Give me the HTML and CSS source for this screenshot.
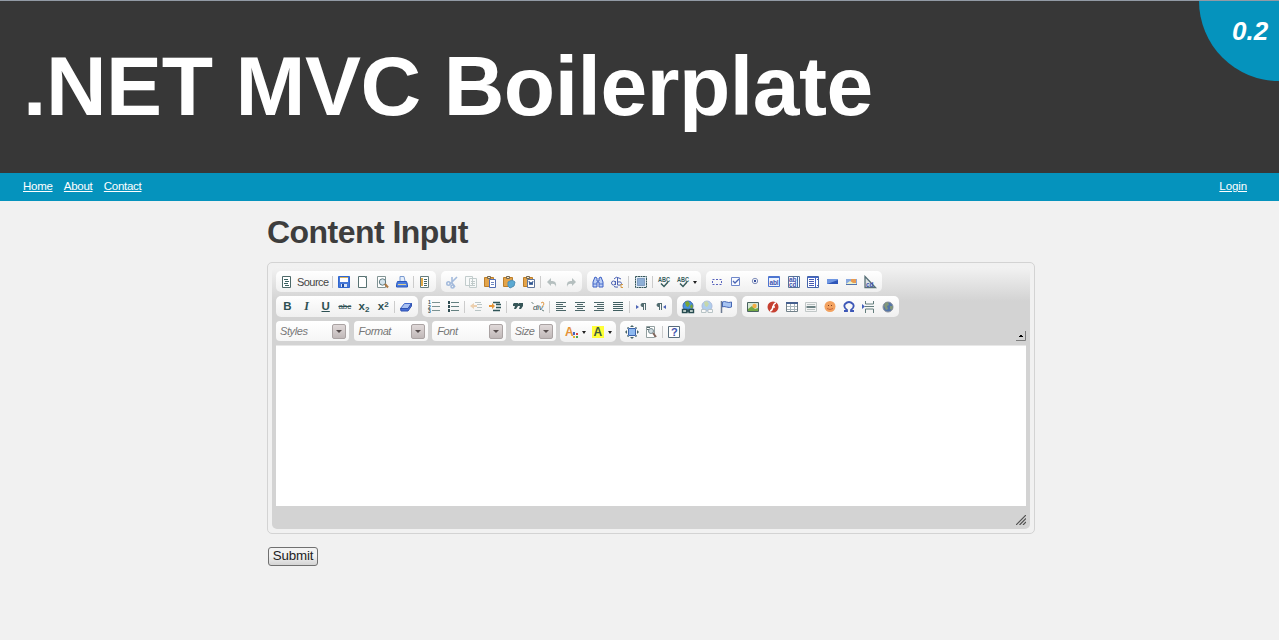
FILE: index.html
```html
<!DOCTYPE html>
<html lang="en">
<head>
<meta charset="utf-8">
<title>.NET MVC Boilerplate</title>
<link rel="stylesheet" href="styles.css">
</head>
<body>
<header class="masthead">
  <h1 class="site-title">.NET MVC Boilerplate</h1>
  <div class="version">0.2</div>
</header>
<nav class="nav">
  <a href="#">Home</a><a href="#">About</a><a href="#">Contact</a><a class="login" href="#">Login</a>
</nav>
<main class="content">
  <h2 class="heading">Content Input</h2>
  <div class="editor">
    <div class="editor-inner">
      <div class="row">
        <div class="group">
          <svg class="ic" viewBox="0 0 16 16"><path fill="#fff" stroke="#4c6868" d="M3.500 2.500h8v11h-8z"/><path stroke="#386060" d="M5 5.500h4M6 7.500h4M5 9.500h4M6 11.500h4"/></svg>
          <span class="source">Source</span><i class="sep"></i>
          <svg class="ic" viewBox="0 0 16 16"><path fill="#4577d8" stroke="#2f66cf" d="M2.500 2.500h11v11h-11z"/><path fill="#fff" d="M4 3h8v5H4z"/><path fill="#dcb35a" d="M4 3h8v1H4z"/><path fill="#d9e5f7" d="M5 10h6v3H5z"/><path fill="#204ca4" d="M6 10h2v3H6z"/></svg>
          <svg class="ic" viewBox="0 0 16 16"><path fill="#fff" stroke="#587272" d="M3.500 2.500h8v11h-8z"/><path fill="#718989" d="M10 2h2v2h-2z"/></svg>
          <svg class="ic" viewBox="0 0 16 16"><path fill="#fff" stroke="#829494" d="M3.500 2.500h8v11h-8z"/><circle cx="8.500" cy="8" r="3.200" fill="#d4e3ec" stroke="#607b80"/><path stroke="#ad7843" stroke-width="2" d="m11 10 3 3.500"/></svg>
          <svg class="ic" viewBox="0 0 16 16"><path fill="#e5eefb" stroke="#7b9bd0" d="M6 7V2.500h4L11 7"/><path fill="#4a7ce0" stroke="#2a58bd" d="m3.500 7.500-1 3v2.500h11v-2.500l-1-3z"/><path stroke="#dfcf92" d="M4 10.500h8"/></svg>
          <i class="sep"></i>
          <svg class="ic" viewBox="0 0 16 16"><path fill="#fff" stroke="#657d7d" d="M3.500 2.500h8v11h-8z"/><path stroke="#e0a948" stroke-width="2" d="M5 4v8"/><path stroke="#456969" d="M7 5.500h3M7 7.500h3M7 9.500h3M7 11.500h3"/></svg>
        </div>
        <div class="group">
          <svg class="ic" viewBox="0 0 16 16"><g fill="none" stroke="#a4bbdc" stroke-width="1.600"><path d="M13 3 6 10M8 3v6l3 4"/><circle cx="4.500" cy="9.500" r="1.700"/><circle cx="8.500" cy="12.500" r="1.500"/></g></svg>
          <svg class="ic" viewBox="0 0 16 16"><path fill="#f8fafa" stroke="#c2cccc" d="M2.500 2.500h7v9h-7zM6.500 4.500h7v9h-7z"/><path stroke="#c0caca" d="M8 7.500h4M8 9.500h4M8 11.500h4"/></svg>
          <svg class="ic" viewBox="0 0 16 16"><path fill="#e3a44a" stroke="#bd7e29" d="M2.500 3.500h9v9h-9z"/><path fill="#eee6cd" stroke="#77664d" d="M5.500 2.500h3v2h-3z"/><path fill="#fff" stroke="#526db1" d="M7.500 5.500h6v8h-6z"/><path stroke="#6f88c1" d="M9 8.500h3M9 10.500h3"/></svg>
          <svg class="ic" viewBox="0 0 16 16"><path fill="#e3a44a" stroke="#bd7e29" d="M2.500 3.500h9v9h-9z"/><path fill="#eee6cd" stroke="#77664d" d="M5.500 2.500h3v2h-3z"/><path fill="#5ba9d2" stroke="#4f8fb5" d="m7 8 4-2 3 2-1 4-4 2-2-2z"/></svg>
          <svg class="ic" viewBox="0 0 16 16"><path fill="#e3a44a" stroke="#bd7e29" d="M2.500 3.500h9v9h-9z"/><path fill="#eee6cd" stroke="#77664d" d="M5.500 2.500h3v2h-3z"/><path fill="#fff" stroke="#60759a" d="M6.500 5.500h7v8h-7z"/><path fill="none" stroke="#29508d" d="m8 7 1 4 1-3 1 3 1-4"/></svg>
          <i class="sep"></i>
          <svg class="ic" viewBox="0 0 16 16"><path fill="#b5bfbf" d="M3 8l4-4v3q6-1 5 6-1-4-5-3v2z"/></svg>
          <svg class="ic" viewBox="0 0 16 16"><path fill="#b5bfbf" d="M13 8 9 4v3q-6-1-5 6 1-4 5-3v2z"/></svg>
        </div>
        <div class="group">
          <svg class="ic" viewBox="0 0 16 16"><path fill="#bed1f5" stroke="#3c5fc4" d="m5 3-2 5v5h4V8h2v5h4V8l-2-5-2 1v3H7V4z"/><path stroke="#4a6fce" d="M3 10h4M9 10h4"/></svg>
          <svg class="ic" viewBox="0 0 16 16"><g fill="none" stroke="#4c62b4"><circle cx="4.500" cy="9" r="2"/><path d="M6.500 7v4M8.500 4v7q4 1 4-1.500t-4-1.500M5 5q2-3 5-1l2 1M5 12.500q2 1 4 .5"/></g><path fill="none" stroke="#d79b42" d="M14 10.500h-2v3h2"/></svg>
          <i class="sep"></i>
          <svg class="ic" viewBox="0 0 16 16"><path fill="#e2eef7" stroke="#36565b" stroke-dasharray="2 .5" d="M2.500 2.500h11v11h-11z"/><path fill="#8eafd6" stroke="#4e6f9c" stroke-dasharray="1 1" d="M4.500 4.500h7v7h-7z"/></svg>
          <i class="sep"></i>
          <svg class="ic" viewBox="0 0 16 16"><text class="spell" x="2" y="7.500" textLength="12" lengthAdjust="spacingAndGlyphs">ABC</text><path fill="none" stroke="#365c5c" stroke-width="1.500" d="m5 9.500 3 3 4-4.500"/></svg>
          <span class="drop"><svg class="ic" viewBox="0 0 16 16"><text class="spell" x="2" y="7.500" textLength="12" lengthAdjust="spacingAndGlyphs">ABC</text><path fill="none" stroke="#365c5c" stroke-width="1.500" d="m5 9.500 3 3 4-4.500"/></svg></span>
        </div>
        <div class="group">
          <svg class="ic" viewBox="0 0 16 16"><path fill="none" stroke="#5862bd" stroke-dasharray="2 1.500" d="M3.500 5.500h9v5h-9z"/></svg>
          <svg class="ic" viewBox="0 0 16 16"><path fill="#f8faff" stroke="#7088ca" d="M3.500 3.500h8v8h-8z"/><path fill="none" stroke="#4965b4" stroke-width="1.300" d="m5 7 2 2 4-4"/></svg>
          <svg class="ic" viewBox="0 0 16 16"><circle cx="8" cy="7" r="2.700" fill="#fff" stroke="#8290bb"/><circle cx="8" cy="7" r="1.200" fill="#354d9b"/></svg>
          <svg class="ic" viewBox="0 0 16 16"><path fill="#edf4ff" stroke="#4d75d0" d="M2.500 2.500h11v10h-11z"/><path stroke="#4d75d0" d="M3 3.500h10"/><text class="field-text" x="3.500" y="11" textLength="9">abl</text></svg>
          <svg class="ic" viewBox="0 0 16 16"><path fill="#f9fbff" stroke="#557298" d="M2.500 2.500h11v11h-11z"/><text class="field-text" x="3" y="8">ab</text><text class="field-text" x="3" y="13">cd</text><path stroke="#4868ad" d="M11.500 3v10"/></svg>
          <svg class="ic" viewBox="0 0 16 16"><path fill="#fff" stroke="#4565aa" d="M2.500 2.500h11v11h-11z"/><path stroke="#4466cb" d="M3 3.500h10M10.500 3v10"/><path stroke="#485bb0" d="M4 5.500h5M4 7.500h5M4 9.500h5M4 11.500h5M12 5.500h1M12 11.500h1"/></svg>
          <svg class="ic" viewBox="0 0 16 16"><path fill="#7097e2" d="M3 5h11v5H3z"/><path fill="#2e56b9" d="m3 10 11-4v4z"/></svg>
          <svg class="ic" viewBox="0 0 16 16"><path fill="#88a8e1" d="M3 5h11v5H3z"/><path fill="#e89b52" d="M8 5h5v4H8z"/><path fill="#edf2cb" d="m3 10 4-3 3 2h3v1z"/><path stroke="#5372aa" d="M3 10.500h11"/></svg>
          <svg class="ic" viewBox="0 0 16 16"><path fill="#dbe4e5" stroke="#587078" stroke-width="1.300" d="m3 2.500 10.500 11H3z"/><text class="field-text" x="4" y="13">cd</text></svg>
        </div>
      </div>
      <div class="row">
        <div class="group">
          <b class="gl">B</b><i class="gl serif">I</i><b class="gl under">U</b><s class="gl small">abc</s><b class="gl">x<sub>2</sub></b><b class="gl">x<sup>2</sup></b>
          <i class="sep"></i>
          <svg class="ic" viewBox="0 0 16 16"><path fill="#a8c0f1" stroke="#4268c9" d="m2.500 9.500 4-5h7l-3.500 5z"/><path fill="#466ed8" stroke="#3153b0" d="M2.500 9.500H10l3.500-5v2.500L10 12H3z"/></svg>
        </div>
        <div class="group">
          <svg class="ic" viewBox="0 0 16 16"><path stroke="#7a9292" d="M6 3.500h8M6 7.500h8M6 11.500h8"/><text class="nums" x="2" y="5">1</text><text class="nums" x="2" y="9.500">2</text><text class="nums" x="2" y="14">3</text></svg>
          <svg class="ic" viewBox="0 0 16 16"><path stroke="#638080" d="M6 3.500h8M6 7.500h8M6 11.500h8"/><path fill="#304d53" d="M3 2h2v3H3zM3 6h2v3H3zM3 10h2v3H3z"/></svg>
          <i class="sep"></i>
          <svg class="ic pale" viewBox="0 0 16 16"><path stroke="#607d7d" d="M7 3.500h6M9 5.500h5M9 8.500h5M7 11.500h6"/><path fill="#dd9643" d="m2 7 4-3v2h3v2H6v2z"/></svg>
          <svg class="ic" viewBox="0 0 16 16"><path stroke="#2f5558" stroke-width="1.300" d="M6 3.500h7M9 5.500h5M9 8.500h5M6 11.500h7"/><path fill="#e69435" d="m8 7-3-3v2H2v2h3v2z"/></svg>
          <i class="sep"></i>
          <svg class="ic" viewBox="0 0 16 16"><path fill="#365658" d="M4 4h4v3l-2 3H4l1-3H3V5zM9 4h4v3l-2 3H9l1-3H8V5z"/></svg>
          <svg class="ic" viewBox="0 0 16 16"><text class="div" x="3" y="10.500" textLength="10">div</text><path fill="none" stroke="#68817e" d="m1.500 3.500 2 1M12 11l2 1"/><path fill="none" stroke="#df9b4b" d="m11 4 2-1 1 2-2 3"/></svg>
          <i class="sep"></i>
          <svg class="ic" viewBox="0 0 16 16"><path stroke="#4b6668" d="M3 3.500h10M3 5.500h7M3 7.500h10M3 9.500h7M3 11.500h10"/></svg>
          <svg class="ic" viewBox="0 0 16 16"><path stroke="#4b6668" d="M3 3.500h10M5 5.500h6M3 7.500h10M5 9.500h6M3 11.500h10"/></svg>
          <svg class="ic" viewBox="0 0 16 16"><path stroke="#4b6668" d="M3 3.500h10M6 5.500h7M3 7.500h10M6 9.500h7M3 11.500h10"/></svg>
          <svg class="ic" viewBox="0 0 16 16"><path stroke="#3f5e60" d="M3 3.500h10M3 5.500h10M3 7.500h10M3 9.500h10M3 11.500h10"/></svg>
          <i class="sep"></i>
          <svg class="ic" viewBox="0 0 16 16"><path fill="#4c64b5" d="m3 6 3 2-3 2z"/><path fill="#536d70" d="M13 4H9q-3 2 0 4h1v3h1V5h1v6h1z"/></svg>
          <svg class="ic" viewBox="0 0 16 16"><path fill="#4c64b5" d="m13 6-3 2 3 2z"/><path fill="#536d70" d="M9 4H5q-3 2 0 4h1v3h1V5h1v6h1z"/></svg>
        </div>
        <div class="group">
          <svg class="ic" viewBox="0 0 16 16"><circle cx="8" cy="7" r="5" fill="#4692dc" stroke="#3b62b5"/><path fill="#7aa536" d="m5 3 3-1 2 3-2 3-2-1zM10 7l2-2 1 3-2 2z"/><path fill="#e5efe9" stroke="#274c50" stroke-width="1.400" d="M2.500 10.500H7v3H2.500zM9 10.500h4.500v3H9zM6 12h4"/></svg>
          <svg class="ic pale" viewBox="0 0 16 16"><circle cx="8" cy="7" r="5" fill="#4692dc" stroke="#3b62b5"/><path fill="#7aa536" d="m5 3 3-1 2 3-2 3-2-1z"/><path fill="#fff" stroke="#607d82" d="M2.500 10.500H7v3H2.500zM9 10.500h4.500v3H9z"/></svg>
          <svg class="ic" viewBox="0 0 16 16"><path stroke="#6d7b92" stroke-width="1.500" d="M3.500 2v12"/><path fill="#a7c4f1" stroke="#4768b5" d="M4.500 3q2-1 4 0t5 0v5q-2 1-5 0t-4 0z"/></svg>
        </div>
        <div class="group">
          <svg class="ic" viewBox="0 0 16 16"><path fill="#d6e7d5" stroke="#496260" d="M2.500 3.500h11v9h-11z"/><path fill="#74a946" d="m3 10 4-3 3 3 3-1v3H3z"/><circle cx="9.500" cy="7" r="2.200" fill="#f4ad44"/></svg>
          <svg class="ic" viewBox="0 0 16 16"><circle cx="8" cy="8" r="5.500" fill="#c64031"/><path fill="none" stroke="#fff" stroke-width="1.500" d="M11 4q-2 0-3 4t-3 4M7 8h3"/></svg>
          <svg class="ic" viewBox="0 0 16 16"><path fill="#fff" stroke="#718089" d="M2.500 3.500h11v9h-11z"/><path stroke="#46608f" stroke-width="2" d="M2 4h12"/><path stroke="#a7b4ba" d="M3 7.500h10M3 10.500h10M6.500 5v7M10.500 5v7"/></svg>
          <svg class="ic" viewBox="0 0 16 16"><path fill="#f3f4f4" stroke="#c1c7c7" d="M2.500 3.500h11v9h-11z"/><path stroke="#bac1c1" d="M4 5.500h8M4 10.500h8"/><path stroke="#405d5f" stroke-width="1.500" d="M3.500 8h9"/></svg>
          <svg class="ic" viewBox="0 0 16 16"><circle cx="8" cy="7.500" r="5.500" fill="#f3a260"/><path fill="#753c22" d="M6 6h1v1H6zM9 6h1v1H9z"/><path fill="none" stroke="#c7653b" d="M5 9.500q3 2 6 0"/></svg>
          <svg class="ic" viewBox="0 0 16 16"><path fill="none" stroke="#3d57b7" stroke-width="1.800" d="M3 12h3v-1Q2 8 4 5q4-4 8 0 2 3-2 6v1h3"/></svg>
          <svg class="ic" viewBox="0 0 16 16"><path fill="none" stroke="#647e7d" d="M5.500 2v3h8V2M5.500 14v-4h8v4M5 7.500h9"/><path fill="#4461bb" d="m2 5 3 2.500L2 10z"/></svg>
          <svg class="ic" viewBox="0 0 16 16"><circle cx="8" cy="8" r="5" fill="#5274a8" stroke="#8d929e"/><path fill="#82977a" d="m5 4 3-1 1 3-2 1 1 3-2 1-2-4zM10 7h3l-1 4-2-1z"/></svg>
        </div>
      </div>
      <div class="row last">
        <div class="combo styles">Styles<span></span></div>
        <div class="combo format">Format<span></span></div>
        <div class="combo font">Font<span></span></div>
        <div class="combo size">Size<span></span></div>
        <div class="group">
          <span class="drop"><svg class="ic" viewBox="0 0 16 16"><text class="color-a" x="1" y="12">A</text><path fill="#3f67c0" d="M9 8h2v3H9z"/><path fill="#d7433d" d="M12 9h2v2h-2z"/><path fill="#e1b52f" d="M9 12h2v2H9z"/><path fill="#4ca253" d="M12 12h2v2h-2z"/></svg></span>
          <span class="drop"><svg class="ic" viewBox="0 0 16 16"><path fill="#ffff38" d="M2 2h12v12H2z"/><text class="bg-a" x="3.500" y="12">A</text></svg></span>
        </div>
        <div class="group">
          <svg class="ic" viewBox="0 0 16 16"><path fill="#8db9f0" stroke="#3b63a9" d="M4.500 4.500h7v7h-7z"/><path fill="#456365" d="m8 1 2 2H6zM8 15l-2-2h4zM1 8l2-2v4zM15 8l-2-2v4z"/><path fill="none" stroke="#7d9295" d="M5 3.500H3.500V5M11 3.500h1.500V5M3.500 11v1.500H5M12.500 11v1.500H11"/></svg>
          <svg class="ic" viewBox="0 0 16 16"><path fill="#fff" stroke="#93a0a0" d="M3.500 2.500h8v11h-8z"/><path stroke="#566b6f" d="M4 3.500h3M4 5.500h2"/><circle cx="8" cy="7" r="2.500" fill="#d0dce1" stroke="#778b8f"/><path stroke="#80665c" stroke-width="2" d="m10 9 3 4"/></svg>
          <i class="sep"></i>
          <svg class="ic" viewBox="0 0 16 16"><path fill="#fff" stroke="#596d7c" d="M2.500 2.500h11v11h-11z"/><text class="help" x="5" y="12">?</text></svg>
        </div>
        <svg class="collapse" viewBox="0 0 10 10"><path fill="none" stroke="#7c7c7c" d="M0 9.500h9.500V0"/><path fill="#000" d="M3 6h4V5H6V4H4v1H3z"/></svg>
      </div>
      <div class="edit-area"></div>
      <div class="statusbar"><svg viewBox="0 0 10 10"><path stroke="#505050" stroke-width="1.200" d="m0 10 10-10M3.500 10 10 3.500M7 10l3-3"/></svg></div>
    </div>
  </div>
  <button class="submit">Submit</button>
</main>
</body>
</html>
```
FILE: styles.css
```css
* { box-sizing: border-box; }
body { margin: 0; height: 640px; overflow: hidden; background: #f1f1f1; color: #373737; font-family: "Liberation Sans", Arial, sans-serif; }
.masthead { position: relative; height: 173px; padding: 37px 23px; background: #373737; border-top: 1px solid #929aa5; overflow: hidden; }
.site-title { margin: 0; color: #fff; font-size: 84px; line-height: 97px; letter-spacing: -.45px; white-space: nowrap; }
.version { position: absolute; right: 0; top: 0; width: 80px; height: 80px; padding: 15px 0 0 33px; border-bottom-left-radius: 80px; background: #0593bd; color: #fff; font: italic bold 26px/30px "Liberation Sans", Arial, sans-serif; }
.nav { display: flex; gap: 11.300px; height: 28px; padding: 0 32px 0 23px; background: #0593bd; font-size: 11.500px; line-height: 27px; letter-spacing: -.28px; }
.nav a { color: #fff; }
.nav .login { margin-left: auto; letter-spacing: -.1px; }
.content { width: 768px; margin-left: 267px; }
.heading { margin: 0; padding-top: 12px; height: 61px; color: #3d3d3d; font-size: 32px; line-height: 38px; letter-spacing: -.540px; }
.editor { height: 271.500px; padding: 4px; border: 1px solid #d3d3d3; border-radius: 5px; }
.editor-inner { height: 262px; padding: 4px; border-radius: 5px; background: linear-gradient(#f2f2f2, #d3d3d3 34px); }
.row { display: flex; gap: 4.600px; height: 25px; align-items: flex-start; }
.row.last { height: 24px; }
.group { display: flex; align-items: center; height: 21px; padding: 0 1.700px; border-radius: 5px; background: linear-gradient(#fff, #f0f0f0); }
.ic { flex: none; width: 16px; height: 16px; margin: 0 1.600px; }
.sep { flex: none; width: 1px; height: 12px; margin: 0 1.500px; background: #ccc; }
.source { width: 33.500px; padding-left: 0; color: #454545; font-size: 11px; letter-spacing: -.5px; }
.drop { display: flex; align-items: center; padding-right: 6.800px; position: relative; }
.drop::after { content: ""; position: absolute; right: 2.500px; top: 7px; border: 2.500px solid transparent; border-top: 3px solid #202020; border-bottom: 0; }
.gl { width: 19.200px; text-align: center; color: #2d5053; font-size: 11.500px; line-height: 19px; white-space: nowrap; }
.serif { font-family: "Liberation Serif", serif; font-weight: bold; font-size: 12px; }
.under { text-decoration: underline; }
.small { font-size: 8px; }
.gl sub, .gl sup { font-size: 8px; line-height: 0; }
.gl sub { vertical-align: -2px; }
.gl sup { vertical-align: 3px; }
.spell { font: bold 6.500px "Liberation Sans", sans-serif; fill: #365c5c; }
.field-text { font: bold 6.500px "Liberation Sans", sans-serif; fill: #4053ac; }
.nums { font: bold 5px "Liberation Sans", sans-serif; fill: #345154; }
.div { font: italic 8px "Liberation Sans", sans-serif; fill: #344f52; }
.color-a { font: bold 12px "Liberation Sans", sans-serif; fill: #e59137; }
.bg-a { font: bold 12px "Liberation Sans", sans-serif; fill: #405a3d; }
.help { font: bold 11px "Liberation Sans", sans-serif; fill: #4152ad; }
.pale { opacity: .4; }
.combo { display: flex; align-items: center; justify-content: space-between; height: 20px; padding: 0 3px 0 4px; border-radius: 4px; background: linear-gradient(#fff, #f5f5f5); color: #777; font-size: 11px; font-style: italic; letter-spacing: -.4px; }
.combo span { display: flex; align-items: center; justify-content: center; width: 14px; height: 15px; border: 1px solid #aaa3a3; border-radius: 2px; background: linear-gradient(#e0d9d9, #c0b8b8); }
.combo span::before { content: ""; border: 3px solid transparent; border-top: 3px solid #554c4c; border-bottom: 0; }
.styles { width: 73px; }
.format { width: 74px; padding-left: 5px; }
.font { width: 74px; padding-left: 5px; }
.size { width: 45px; }
.collapse { width: 10px; height: 10px; margin: 10px 0 0 auto; }
.edit-area { height: 160.500px; background: #fff; border-top: 1px solid #e8e8e8; }
.statusbar { display: flex; justify-content: flex-end; padding-top: 9px; }
.statusbar svg { width: 10px; height: 10px; }
.submit { display: block; width: 50px; height: 19px; margin: 13px 0 0 1px; padding: 0; border: 1px solid #707070; border-radius: 3px; background: linear-gradient(#f2f2f2 45%, #d4d4d4); color: #222; font: 13.333px/16px "Liberation Sans", Arial, sans-serif; letter-spacing: -.15px; }
```
